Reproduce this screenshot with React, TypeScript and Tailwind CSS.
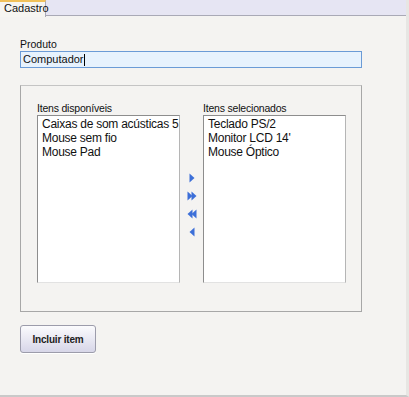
import React from "react";

const available = ["Caixas de som acústicas 5", "Mouse sem fio", "Mouse Pad"];
const selected = ["Teclado PS/2", "Monitor LCD 14'", "Mouse Óptico"];

function Arrow({ dir, double }: { dir: "left" | "right"; double?: boolean }) {
  const tri = dir === "right" ? "M0 0 L5 4.5 L0 9 Z" : "M5 0 L0 4.5 L5 9 Z";
  return (
    <svg width="10" height="10" viewBox="0 0 10 10" className="block">
      {double ? (
        <>
          <path d={tri} transform="translate(0.5 0.5)" fill="#3c6fd8" />
          <path d={tri} transform="translate(4.5 0.5)" fill="#3c6fd8" />
        </>
      ) : (
        <path d={tri} transform="translate(2.5 0.5)" fill="#3c6fd8" />
      )}
    </svg>
  );
}

function ListBox({ label, items }: { label: string; items: string[] }) {
  return (
    <div className="flex flex-col">
      <span className="text-[10.5px] leading-[13px] text-[#111] tracking-[-0.2px]">{label}</span>
      <div className="w-[143px] h-[168px] border border-[#8d8d8d] border-b-[#e2e2e2] border-r-[#b5b5b5] bg-white pl-[4px] pt-[1px]">
        {items.map((it) => (
          <div key={it} className="text-[12px] leading-[14px] text-[#111] tracking-[-0.25px] whitespace-nowrap">
            {it}
          </div>
        ))}
      </div>
    </div>
  );
}

export default function App() {
  return (
    <div className="w-[409px] h-[397px] bg-[#f4f3f1] font-['Liberation_Sans',Arial,sans-serif] text-[#111] flex flex-col overflow-hidden border-r-[3px] border-r-[#e7e6e3] border-b-[2px] border-b-[#c9c9c9]">
      <div className="h-[16px] flex bg-[#e6e5f3] border-b border-[#a9a9b6] shrink-0">
        <div className="w-[46px] h-[17px] bg-[#f6f5f1] border-t-[2px] border-t-[#f1c15a] border-r border-r-[#a9a9b6] text-[11px] leading-[13px] pl-[4px]">
          Cadastro
        </div>
      </div>
      <div className="pl-[20px] pt-[22px] flex flex-col">
        <span className="text-[10.5px] leading-[13px]">Produto</span>
        <div className="w-[342px] h-[17px] border border-[#6b9bd6] bg-[#e7f2fd] text-[11px] leading-[15px] pl-[2px] flex items-center">
          Computador<span className="inline-block w-px h-[12px] bg-black" />
        </div>
        <div className="mt-[17px] w-[342px] h-[227px] border border-[#a7a7a7] border-t-[#c4c4c4] flex pl-[16px] pt-[16px]">
          <ListBox label="Itens disponíveis" items={available} />
          <div className="w-[23px] flex flex-col items-center pt-[71px] gap-[8px]">
            <Arrow dir="right" />
            <Arrow dir="right" double />
            <Arrow dir="left" double />
            <Arrow dir="left" />
          </div>
          <ListBox label="Itens selecionados" items={selected} />
        </div>
        <button className="mt-[13px] w-[76px] h-[28px] rounded-[3px] border border-[#9c9cab] bg-gradient-to-b from-[#fbfbfd] to-[#d7d6e8] text-[10px] font-semibold text-[#222] tracking-[-0.2px] shadow-[0_1px_0_#fff]">
          Incluir item
        </button>
      </div>
    </div>
  );
}
